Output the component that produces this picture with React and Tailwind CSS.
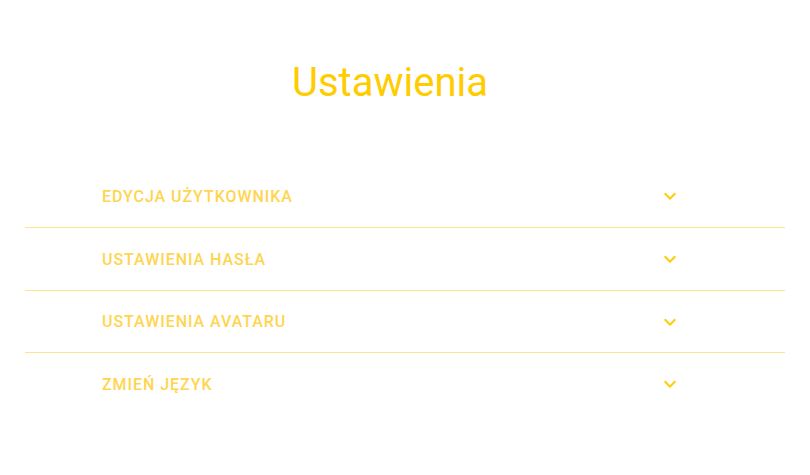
import React from "react";

const items = [
  { t: "Edycja użytkownika", h: "h-[63px]" },
  { t: "Ustawienia hasła", h: "h-[63px]" },
  { t: "Ustawienia avataru", h: "h-[62px]" },
  { t: "Zmień język", h: "h-[62px]" },
];

function Chevron() {
  return (
    <svg width="24" height="24" viewBox="0 0 24 24" className="shrink-0">
      <path d="M16.59 8.59L12 13.17 7.41 8.59 6 10l6 6 6-6z" fill="#ffcc00" />
    </svg>
  );
}

export default function App() {
  return (
    <div className="w-[810px] h-[475px] bg-white" style={{ fontFamily: "Roboto, sans-serif" }}>
      <div className="pt-[57px] pr-[30px] flex justify-center">
        <h1 className="text-[40px] leading-[52px] font-normal text-[#ffcc00]">Ustawienia</h1>
      </div>
      <div className="mx-[25px] mt-[56px]">
        {items.map((it, i) => (
          <div
            key={it.t}
            className={`flex items-center ${it.h} pl-[77px] pr-[103px] ${i < items.length - 1 ? "border-b border-[#ffe58a]" : ""}`}
          >
            <span className="flex-1 pt-[1px] uppercase text-[16px] font-medium tracking-[0.95px] text-[#ffd54f]">{it.t}</span>
            <Chevron />
          </div>
        ))}
      </div>
    </div>
  );
}
